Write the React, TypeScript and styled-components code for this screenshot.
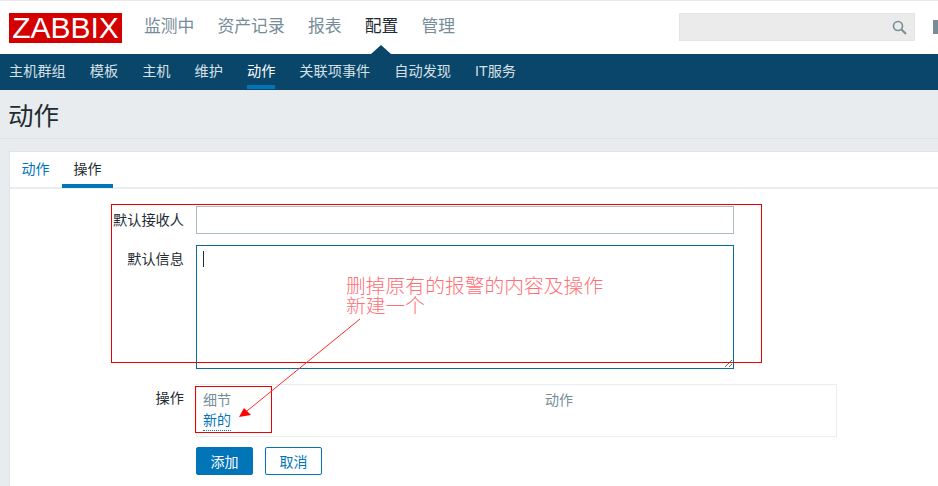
import React from 'react';
import styled, { createGlobalStyle } from 'styled-components';

const GlobalStyle = createGlobalStyle`
    html, body {
        margin: 0;
        padding: 0;
        width: 938px;
        height: 486px;
        overflow: hidden;
        background: #e9ecef;
    }
    * {
        box-sizing: border-box;
    }
`;

const font = `'Liberation Sans', 'Noto Sans CJK SC', sans-serif`;

const Page = styled.div`
    position: relative;
    width: 938px;
    height: 486px;
    overflow: hidden;
    font-family: ${font};
    background: #e9ecef;
`;

const Header = styled.header`
    display: flex;
    align-items: flex-start;
    height: 54px;
    padding: 12px 0 0 9px;
    background: #fff;
    border-top: 1px solid #ebebeb;
    flex-shrink: 0;
`;

const Logo = styled.div`
    width: 113px;
    height: 30px;
    background: #d40000;
    color: #fff;
    font-size: 30px;
    line-height: 30px;
    text-align: center;
    flex-shrink: 0;
`;

const MainNav = styled.nav`
    display: flex;
    gap: 23.2px;
    margin-left: 22px;
`;

const MainItem = styled.a<{ $active?: boolean }>`
    position: relative;
    font-size: 16.8px;
    line-height: 28px;
    color: ${(p) => (p.$active ? '#1f2c33' : '#768d99')};

    ${(p) =>
        p.$active &&
        `
        &::after {
            content: '';
            position: absolute;
            left: 50%;
            bottom: -13px;
            margin-left: -10px;
            border-left: 10px solid transparent;
            border-right: 10px solid transparent;
            border-bottom: 9px solid #0a466a;
        }
    `}
`;

const SearchBox = styled.div`
    display: flex;
    align-items: center;
    justify-content: flex-end;
    width: 236px;
    height: 28px;
    margin-left: auto;
    padding-right: 7px;
    background: #ebebeb;
    border: 1px solid #e4e4e4;
    flex-shrink: 0;
`;

const HelpStub = styled.div`
    width: 5px;
    height: 14px;
    margin: 7px 0 0 18px;
    background: #768d99;
    flex-shrink: 0;
`;

const SubNav = styled.nav`
    display: flex;
    height: 36px;
    padding-left: 9px;
    gap: 24px;
    background: #0a466a;
    flex-shrink: 0;
`;

const SubItem = styled.a<{ $active?: boolean }>`
    height: 35px;
    font-size: 14.2px;
    line-height: 34px;
    color: ${(p) => (p.$active ? '#fff' : '#d6e0e6')};
    border-bottom: ${(p) => (p.$active ? '4px solid #0275b8' : 'none')};
`;

const TitleBar = styled.div`
    height: 49px;
    padding-left: 8px;
    border-bottom: 1px solid #dfe4e7;
`;

const Title = styled.h1`
    margin: 0;
    font-size: 25.5px;
    font-weight: 400;
    line-height: 52px;
    color: #1f2c33;
`;

const Card = styled.section`
    margin: 12px 0 0 9px;
    height: 340px;
    background: #fff;
    border-top: 1px solid #dfe4e7;
    border-left: 1px solid #dfe4e7;
`;

const Tabs = styled.div`
    display: flex;
    gap: 1px;
    height: 37px;
    border-bottom: 2px solid #ebeef0;
`;

const Tab = styled.a<{ $active?: boolean }>`
    width: 51px;
    height: 36px;
    font-size: 14px;
    line-height: 34px;
    text-align: center;
    color: ${(p) => (p.$active ? '#1f2c33' : '#0275b8')};
    border-bottom: ${(p) => (p.$active ? '4px solid #0275b8' : 'none')};
`;

const Form = styled.div`
    display: flex;
    flex-direction: column;
    padding-top: 17px;
`;

const Row = styled.div<{ $gap?: number }>`
    display: grid;
    grid-template-columns: 174px 1fr;
    column-gap: 12px;
    margin-bottom: ${(p) => p.$gap ?? 11}px;
`;

const Label = styled.label`
    font-size: 14.2px;
    line-height: 28px;
    color: #1f2c33;
    text-align: right;
    white-space: nowrap;
`;

const TextInput = styled.input`
    display: block;
    width: 538px;
    height: 28px;
    padding: 0 6px;
    background: #fff;
    border: 1px solid #acbbc3;
    outline: none;
`;

const AreaWrap = styled.div`
    position: relative;
    width: 538px;
    height: 124px;
`;

const TextArea = styled.textarea`
    display: block;
    width: 538px;
    height: 124px;
    padding: 4px 6px;
    background: #fff;
    border: 1px solid #0a6a9e;
    border-radius: 0;
    outline: none;
    resize: both;
`;

const Caret = styled.span`
    position: absolute;
    left: 7px;
    top: 6px;
    width: 1px;
    height: 16px;
    background: #1f2c33;
`;

const OpsTable = styled.div`
    display: grid;
    grid-template-columns: 342px 1fr;
    align-content: start;
    width: 641px;
    height: 53px;
    padding: 5px 6px 0;
    border: 1px solid #ebeef0;
`;

const OpsHead = styled.span`
    font-size: 14px;
    line-height: 21px;
    color: #768d99;
`;

const NewLink = styled.a`
    justify-self: start;
    font-size: 14px;
    line-height: 19px;
    color: #0275b8;
    border-bottom: 1px dotted #0275b8;
`;

const Buttons = styled.div`
    display: flex;
    gap: 12px;
    margin-left: 186px;
`;

const Button = styled.button<{ $primary?: boolean }>`
    width: 57px;
    height: 28px;
    padding: 0;
    font-family: ${font};
    font-size: 14px;
    border-radius: 2px;
    border: 1px solid #0275b8;
    color: ${(p) => (p.$primary ? '#fff' : '#0275b8')};
    background: ${(p) => (p.$primary ? '#0275b8' : '#fff')};
`;

const MarkBox = styled.div<{ $x: number; $y: number; $w: number; $h: number }>`
    position: absolute;
    left: ${(p) => p.$x}px;
    top: ${(p) => p.$y}px;
    width: ${(p) => p.$w}px;
    height: ${(p) => p.$h}px;
    border: 1px solid #ee0000;
    pointer-events: none;
`;

const Note = styled.div`
    position: absolute;
    left: 346px;
    top: 275px;
    font-family: 'Noto Sans CJK SC', sans-serif;
    font-size: 19.8px;
    font-weight: 300;
    line-height: 20px;
    color: #ff7076;
    white-space: nowrap;
`;

const ArrowSvg = styled.svg`
    position: absolute;
    left: 230px;
    top: 315px;
`;

export default function App() {
    const mainItems = ['监测中', '资产记录', '报表', '配置', '管理'];
    const subItems = ['主机群组', '模板', '主机', '维护', '动作', '关联项事件', '自动发现', 'IT服务'];

    return (
        <Page>
            <GlobalStyle />
            <Header>
                <Logo>ZABBIX</Logo>
                <MainNav>
                    {mainItems.map((item) => (
                        <MainItem key={item} $active={item === '配置'}>
                            {item}
                        </MainItem>
                    ))}
                </MainNav>
                <SearchBox>
                    <svg width="15" height="15" viewBox="0 0 15 15" fill="none" stroke="#768d99">
                        <circle cx="6" cy="6" r="4.5" strokeWidth="1.6" />
                        <path d="M9.5 9.5 L14 14" strokeWidth="2" />
                    </svg>
                </SearchBox>
                <HelpStub />
            </Header>
            <SubNav>
                {subItems.map((item) => (
                    <SubItem key={item} $active={item === '动作'}>
                        {item}
                    </SubItem>
                ))}
            </SubNav>
            <TitleBar>
                <Title>动作</Title>
            </TitleBar>
            <Card>
                <Tabs>
                    <Tab>动作</Tab>
                    <Tab $active>操作</Tab>
                </Tabs>
                <Form>
                    <Row>
                        <Label>默认接收人</Label>
                        <TextInput />
                    </Row>
                    <Row $gap={15}>
                        <Label>默认信息</Label>
                        <AreaWrap>
                            <TextArea />
                            <Caret />
                        </AreaWrap>
                    </Row>
                    <Row $gap={10}>
                        <Label>操作</Label>
                        <OpsTable>
                            <OpsHead>细节</OpsHead>
                            <OpsHead>动作</OpsHead>
                            <NewLink>新的</NewLink>
                        </OpsTable>
                    </Row>
                    <Buttons>
                        <Button $primary>添加</Button>
                        <Button>取消</Button>
                    </Buttons>
                </Form>
            </Card>
            <MarkBox $x={111} $y={204} $w={651} $h={159} />
            <MarkBox $x={195} $y={386} $w={77} $h={47} />
            <Note>
                删掉原有的报警的内容及操作
                <br />
                新建一个
            </Note>
            <ArrowSvg width="135" height="110" viewBox="0 0 135 110">
                <path d="M130 4 L17 96" stroke="#ff2a2a" strokeWidth="1" fill="none" />
                <path d="M9 102 L14 93 L21 100 Z" fill="#ff0000" />
            </ArrowSvg>
        </Page>
    );
}
